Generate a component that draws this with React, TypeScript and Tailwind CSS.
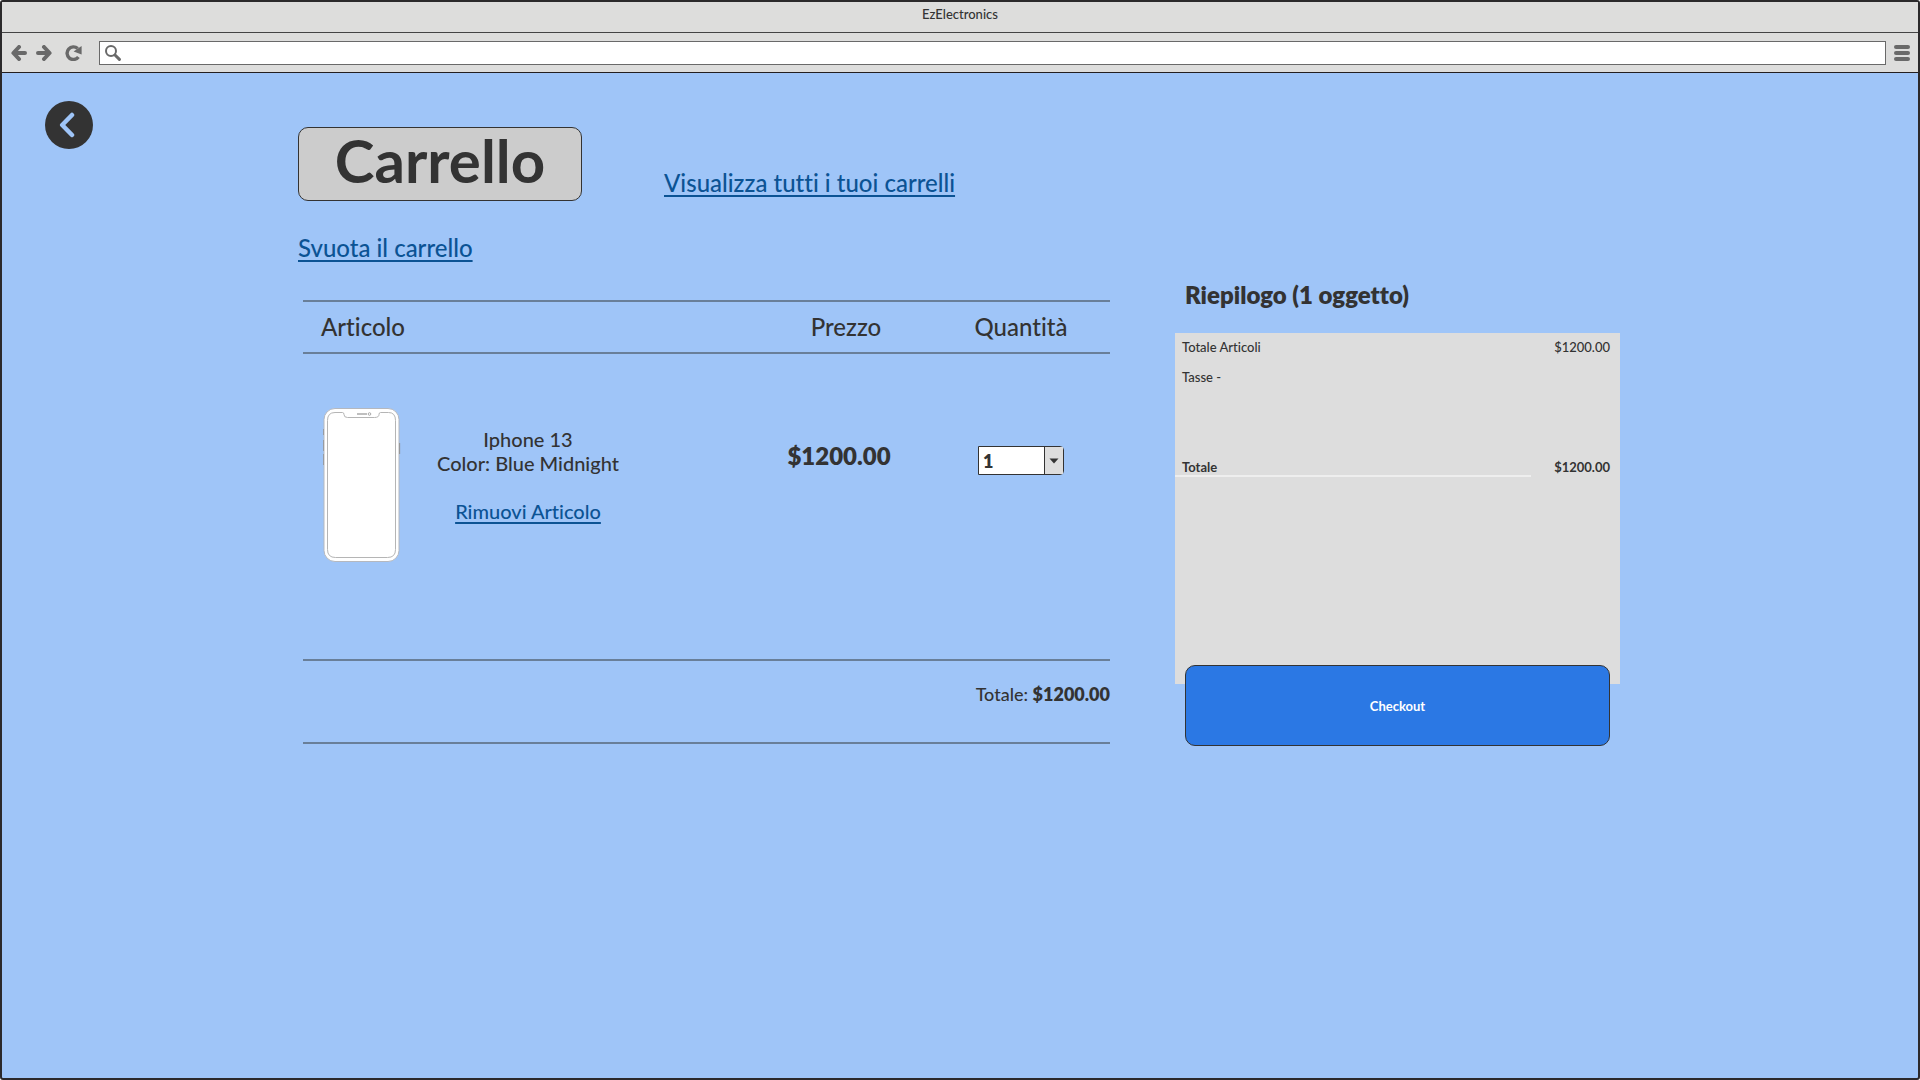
import React from "react";

const cartItems = [
  { name: "Iphone 13", color: "Blue Midnight", price: "$1200.00", quantity: 1 },
];
const total = "$1200.00";

function ArrowIcon({ flip = false }: { flip?: boolean }) {
  return (
    <svg
      width="16"
      height="16"
      viewBox="0 0 16 16"
      fill="none"
      stroke="#696969"
      strokeWidth="4"
      strokeLinecap="round"
      strokeLinejoin="round"
      className={flip ? "rotate-180" : ""}
      aria-hidden="true"
    >
      <path d="M14 8H3M8 2 2.4 8 8 14" />
    </svg>
  );
}

function ReloadIcon() {
  return (
    <svg width="17" height="16" viewBox="0 0 17 16" aria-hidden="true">
      <path
        d="M12.7 3.6A6.3 6.3 0 1 0 13.4 12"
        fill="none"
        stroke="#696969"
        strokeWidth="3.4"
      />
      <path d="M16.6 1v8.4L8.6 6.6z" fill="#696969" />
    </svg>
  );
}

function SearchIcon() {
  return (
    <svg
      width="16"
      height="16"
      viewBox="0 0 16 16"
      fill="none"
      stroke="#696969"
      aria-hidden="true"
    >
      <circle cx="6" cy="6" r="5" strokeWidth="2" />
      <path d="m10 10 4.4 4.4" strokeWidth="3" strokeLinecap="round" />
    </svg>
  );
}

function PhoneDrawing() {
  return (
    <svg
      width="78"
      height="154"
      viewBox="0 0 78 154"
      className="shrink-0"
      role="img"
      aria-label="Iphone 13"
    >
      <path
        d="M.8 21v6M.8 32v11M.8 46v11M76.4 35v11"
        stroke="#777"
        strokeWidth="1.4"
      />
      <rect x="1" y=".5" width="75" height="153" rx="11" fill="#fff" stroke="#b5b8be" />
      <path
        d="M12 4.5h7.500q1.500 0 1.500 2 0 3 3.500 3h27q4.500 0 4.500-3 0-2 1.500-2H65.500q7 0 7 8V141.500q0 8-8 8H12.500q-8 0-8-8V12.500q0-8 7.500-8z"
        fill="none"
        stroke="#b5b5b5"
      />
      <path d="M34 6h10" stroke="#aaa" strokeWidth="1.5" />
      <circle cx="46.500" cy="6" r="1.300" fill="none" stroke="#aaa" />
    </svg>
  );
}

function BrowserChrome() {
  return (
    <header className="bg-[#dddddc]">
      <div className="flex h-[31px] items-start justify-center border-b border-[#444] pt-1 text-[13px] leading-4">
        EzElectronics
      </div>
      <div className="flex h-10 items-center border-b border-[#231f20] pr-2 pl-[9px]">
        <div className="flex items-center">
          <button type="button" aria-label="Indietro">
            <ArrowIcon />
          </button>
          <button type="button" aria-label="Avanti" className="ml-[9px]">
            <ArrowIcon flip />
          </button>
          <button type="button" aria-label="Ricarica" className="ml-[13px]">
            <ReloadIcon />
          </button>
        </div>
        <label className="ml-[17px] flex h-6 flex-1 items-center gap-2 border border-[#696969] bg-white pl-[5px]">
          <SearchIcon />
          <input
            type="text"
            aria-label="Indirizzo"
            className="min-w-0 flex-1 text-sm outline-none"
          />
        </label>
        <button type="button" aria-label="Menu" className="ml-2 flex w-4 flex-col gap-0.5">
          <span className="h-1 rounded-full bg-[#696969]" />
          <span className="h-1 rounded-full bg-[#696969]" />
          <span className="h-1 rounded-full bg-[#696969]" />
        </button>
      </div>
    </header>
  );
}

function CartTable() {
  return (
    <table className="w-full table-fixed border-separate border-spacing-0">
      <colgroup>
        <col />
        <col className="w-[180px]" />
        <col className="w-[178px]" />
      </colgroup>
      <thead>
        <tr className="h-[54px] text-2xl leading-7">
          <th className="border-y-2 border-[#697f99] pl-[18px] text-left font-medium">Articolo</th>
          <th className="border-y-2 border-[#697f99] pl-2 text-center font-medium">Prezzo</th>
          <th className="border-y-2 border-[#697f99] text-center font-medium">Quantità</th>
        </tr>
      </thead>
      <tbody>
        {cartItems.map((item) => (
          <tr key={item.name} className="h-[305px] align-top">
            <td className="pt-[54px] pl-5">
              <div className="flex">
                <PhoneDrawing />
                <div className="ml-[31px] w-48 pt-[19px] text-center text-xl leading-6">
                  <p>{item.name}</p>
                  <p>Color: {item.color}</p>
                  <a href="#rimuovi" className="mt-6 inline-block text-[#0b5394] underline underline-offset-3">
                    Rimuovi Articolo
                  </a>
                </div>
              </div>
            </td>
            <td className="pt-[88px] pr-1.5 text-center text-2xl leading-7 font-extrabold">{item.price}</td>
            <td className="pt-[92px]">
              <div className="relative mx-auto w-[86px]">
                <select
                  aria-label="Quantità"
                  defaultValue={item.quantity}
                  className="block h-[29px] w-full appearance-none rounded-r-sm border border-[#333] bg-white pl-1 text-lg leading-6 font-extrabold"
                >
                  <option>1</option>
                  <option>2</option>
                  <option>3</option>
                </select>
                <span className="pointer-events-none absolute inset-y-px right-px flex w-[19px] items-center justify-center border-l border-[#333] bg-[#ddd]">
                  <svg width="10" height="6" viewBox="0 0 10 6" aria-hidden="true">
                    <path d="M.5.500h9L5 5.500z" fill="#333" />
                  </svg>
                </span>
              </div>
            </td>
          </tr>
        ))}
      </tbody>
      <tfoot>
        <tr className="h-[85px] align-top">
          <td
            colSpan={3}
            className="border-y-2 border-[#697f99] pt-[21px] text-right text-lg leading-6"
          >
            Totale: <strong className="font-extrabold">{total}</strong>
          </td>
        </tr>
      </tfoot>
    </table>
  );
}

function Summary() {
  return (
    <aside className="pt-px">
      <h2 className="pl-2.5 text-2xl leading-7 font-extrabold">Riepilogo (1 oggetto)</h2>
      <div className="mt-6 h-[351px] bg-[#ddd] pt-1.5 text-[13px] leading-4">
        <dl>
          <div className="flex justify-between pr-2.5 pl-[7px]">
            <dt>Totale Articoli</dt>
            <dd>{total}</dd>
          </div>
          <div className="mt-3.5 pl-[7px]">
            <dt>Tasse -</dt>
          </div>
          <div className="mt-[74px] flex justify-between pr-2.5 font-bold">
            <dt className="w-[356px] border-b-2 border-[#eee] pl-[7px]">Totale</dt>
            <dd>{total}</dd>
          </div>
        </dl>
      </div>
      <div className="relative -mt-[19px] px-2.5">
        <button
          type="button"
          className="h-[81px] w-full rounded-[10px] border border-[#333] bg-[#2b78e4] text-[13px] leading-4 font-bold text-white"
        >
          Checkout
        </button>
      </div>
    </aside>
  );
}

export default function App() {
  return (
    <div className="min-h-screen rounded-[3px] border-2 border-[#2b292b] bg-[#9fc5f8] font-['Lato',sans-serif] font-medium text-[#333] [font-variant-ligatures:none]">
      <BrowserChrome />
      <main className="grid grid-cols-[1fr_minmax(0,1324px)_1fr]">
        <div className="pt-7 pl-[43px]">
          <button
            type="button"
            aria-label="Torna indietro"
            className="flex size-12 items-center justify-center rounded-full bg-[#333]"
          >
            <svg
              width="16"
              height="26"
              viewBox="0 0 16 26"
              fill="none"
              stroke="#9fc5f8"
              strokeWidth="4.500"
              strokeLinejoin="round"
              strokeLinecap="round"
              className="-ml-1"
              aria-hidden="true"
            >
              <path d="M13 3 3.200 13 13 23" />
            </svg>
          </button>
        </div>
        <div className="pt-[54px]">
          <div className="flex items-end">
            <h1 className="flex h-[74px] w-[284px] items-center justify-center rounded-[10px] border border-[#333] bg-[#ccc] pb-2 text-6xl leading-none font-bold">
              Carrello
            </h1>
            <a
              href="#carrelli"
              className="mb-1 ml-[82px] text-2xl leading-7 text-[#0b5394] underline underline-offset-3"
            >
              Visualizza tutti i tuoi carrelli
            </a>
          </div>
          <a
            href="#svuota"
            className="mt-[33px] inline-block text-2xl leading-7 text-[#0b5394] underline underline-offset-3"
          >
            Svuota il carrello
          </a>
          <div className="mt-[17px] grid grid-cols-[minmax(0,1fr)_445px] gap-[65px] pr-0.5 pl-[5px]">
            <div className="pt-5">
              <CartTable />
            </div>
            <Summary />
          </div>
        </div>
      </main>
    </div>
  );
}
